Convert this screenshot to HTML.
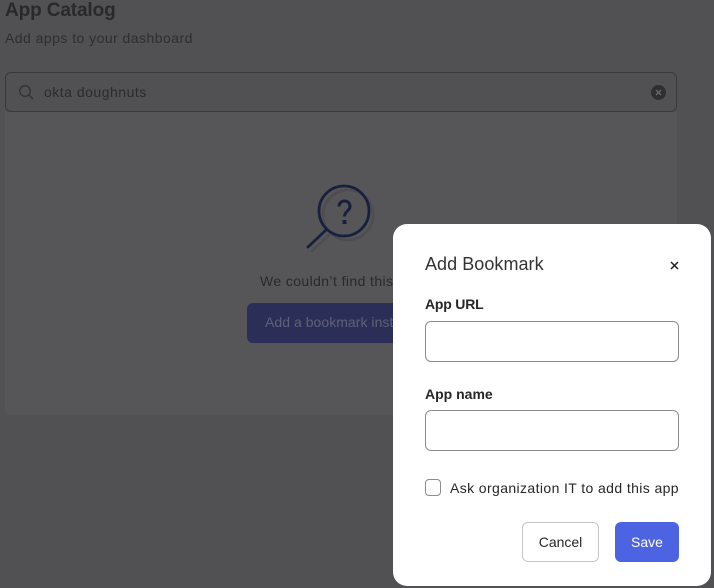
<!DOCTYPE html>
<html><head><meta charset="utf-8">
<style>
*{box-sizing:border-box}
html,body{margin:0;padding:0}
body{width:714px;height:588px;position:relative;overflow:hidden;background:#515153;font-family:"Liberation Sans",sans-serif;color:#272729}
.t{position:absolute;white-space:nowrap;line-height:1}
</style></head>
<body>
<div class="t" style="left:5px;top:1px;font-size:19px;font-weight:700;color:#29292b;letter-spacing:-.12px">App Catalog</div>
<div class="t" style="left:5px;top:31px;font-size:14px;color:#2e2e30;letter-spacing:.46px">Add apps to your dashboard</div>
<div style="position:absolute;left:5px;top:112px;width:672px;height:303px;background:#565658;border-radius:0 0 6px 6px"></div>
<div style="position:absolute;left:5px;top:72px;width:672px;height:40px;border:1px solid #39393b;border-radius:6px;background:#515153"></div>
<svg style="position:absolute;left:18px;top:84px" width="16" height="16" viewBox="0 0 16 16" fill="none" stroke="#323234" stroke-width="1.3"><circle cx="7" cy="7" r="5.3"/><path d="M11 11l4 4"/></svg>
<div class="t" style="left:44px;top:85px;font-size:14px;color:#2b2b2d;letter-spacing:.5px">okta doughnuts</div>
<svg style="position:absolute;left:651px;top:85px" width="15" height="15" viewBox="0 0 15 15"><circle cx="7.5" cy="7.500" r="7.500" fill="#2f2f32"/><path d="M5 5l5 5M10 5l-5 5" stroke="#69696b" stroke-width="1.400"/></svg>
<svg style="position:absolute;left:300px;top:180px" width="80" height="72" viewBox="0 0 80 72" fill="none">
<circle cx="48" cy="35" r="25" stroke="#48484e" stroke-width="2.500" opacity=".7"/>
<path d="M30 54L12 71" stroke="#48484e" stroke-width="2.500" stroke-linecap="round" opacity=".7"/>
<circle cx="44" cy="31" r="25" stroke="#18203f" stroke-width="2.800"/>
<path d="M26 50L8 67" stroke="#18203f" stroke-width="2.800" stroke-linecap="round"/>
<path d="M39 26.500c0-3.500 2.500-5.500 5.500-5.500s5.500 2 5.500 5.500c0 4.500-5.500 4.500-5.500 10" stroke="#18203f" stroke-width="3"/>
<rect x="42.500" y="40" width="4" height="4" fill="#18203f"/>
</svg>
<div class="t" style="left:260px;top:274px;font-size:14px;color:#29292b;letter-spacing:.4px">We couldn’t find this</div>
<div style="position:absolute;left:247px;top:303px;width:160px;height:40px;background:#2b2f57;border-radius:6px"></div>
<div class="t" style="left:265px;top:315px;font-size:14px;color:#5e607a;letter-spacing:.04px">Add a bookmark inst</div>

<div style="position:absolute;left:393px;top:224px;width:318px;height:362px;background:#fff;border-radius:14px"></div>
<div class="t" style="left:425px;top:255px;font-size:18px;color:#333335;letter-spacing:.05px">Add Bookmark</div>
<svg style="position:absolute;left:670px;top:261px" width="9" height="9" viewBox="0 0 9 9"><path d="M1 1l7 7M8 1l-7 7" stroke="#222" stroke-width="1.500"/></svg>
<div class="t" style="left:425px;top:297px;font-size:14px;font-weight:700;color:#272729;letter-spacing:-.2px">App URL</div>
<div style="position:absolute;left:425px;top:321px;width:254px;height:41px;border:1px solid #8c8c8e;border-radius:6px;background:#fff"></div>
<div class="t" style="left:425px;top:387px;font-size:14px;font-weight:700;color:#272729">App name</div>
<div style="position:absolute;left:425px;top:410px;width:254px;height:41px;border:1px solid #8c8c8e;border-radius:6px;background:#fff"></div>
<div style="position:absolute;left:425px;top:479px;width:16px;height:17px;border:1px solid #8c8c8e;border-radius:4px;background:#fff"></div>
<div class="t" style="left:450px;top:481px;font-size:14px;color:#272729;letter-spacing:.39px">Ask organization IT to add this app</div>
<div style="position:absolute;left:522px;top:522px;width:77px;height:40px;border:1px solid #c6c6c8;border-radius:6px;background:#fff"></div>
<div class="t" style="left:522px;top:535px;width:77px;text-align:center;font-size:14px;color:#272729">Cancel</div>
<div style="position:absolute;left:615px;top:522px;width:64px;height:40px;border-radius:6px;background:#4c64e2"></div>
<div class="t" style="left:615px;top:535px;width:64px;text-align:center;font-size:14px;color:#fff">Save</div>
</body></html>
